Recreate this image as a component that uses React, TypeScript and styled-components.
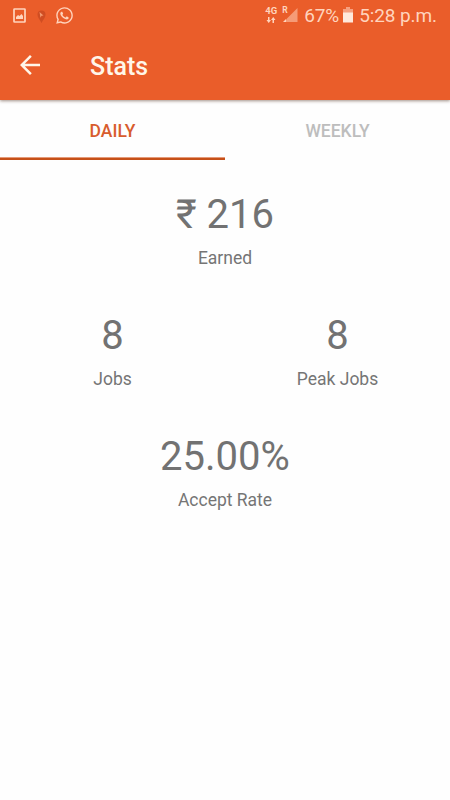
import React from 'react';
import styled, { createGlobalStyle } from 'styled-components';
import { FaWhatsapp } from 'react-icons/fa';
import { MdArrowBack } from 'react-icons/md';

const Global = createGlobalStyle`
  * { box-sizing: border-box; }
  html, body { margin: 0; background: #fefefe; }
  body { font-family: Roboto, "Noto Sans", sans-serif; }
  svg { display: block; flex: none; }
`;
const Screen = styled.div`width: 450px; height: 800px; background: #fefefe; overflow: hidden;`;
const Header = styled.header`height: 100px; background: #ea5d2a; box-shadow: 0 1px 3px rgba(70,35,15,.5);`;
const StatusBar = styled.div`height: 30px; display: flex; align-items: center; padding: 0 13px; color: #ffd4bd;`;
const Notices = styled.div`display: flex; align-items: center; flex: 1;`;
const Pin = styled.svg`margin: 2px 9px 0 11px;`;
const Network = styled.div`
  width: 14px; height: 16px; display: flex; flex-direction: column; align-items: center;
  justify-content: space-between; font-size: 9.5px; line-height: 8px; font-weight: 700; margin-right: 4px;
`;
const Signal = styled.div`
  width: 16px; height: 16px; display: grid; font-size: 8.5px; line-height: 7px; font-weight: 700; margin-right: 6px;
  & > * { grid-area: 1 / 1; }
`;
const StatusText = styled.span`font-size: 19px; line-height: 30px; letter-spacing: -0.1px; padding-top: 2px; white-space: nowrap;`;
const Battery = styled.svg`margin: 0 6px 0 4px;`;
const TitleRow = styled.div`height: 70px; display: flex; align-items: center; padding: 0 0 0 15px; gap: 45px;`;
const Title = styled.h1`margin: 3px 0 0; font-size: 25px; font-weight: 500; line-height: 30px; color: #fff6e9;`;
const Tabs = styled.nav`height: 60px; display: grid; grid-template-columns: 1fr 1fr;`;
const Tab = styled.div<{ $active?: boolean }>`
  display: flex; align-items: center; justify-content: center; padding-top: 4px;
  font-size: 17.5px; font-weight: 500;
  color: ${p => p.$active ? '#d85c2d' : '#bdbdbd'};
  background: ${p => p.$active ? 'linear-gradient(#e59a78, #e59a78) 0 57px / 100% 1px no-repeat' : 'transparent'};
  border-bottom: 2px solid ${p => p.$active ? '#c65019' : 'transparent'};
`;
const Stats = styled.main`display: grid; grid-template-columns: 1fr 1fr; grid-auto-rows: 121px; padding-top: 31px;`;
const Stat = styled.section<{ $wide?: boolean }>`
  grid-column: ${p => p.$wide ? 'span 2' : 'auto'}; text-align: center;
`;
const Value = styled.div`height: 48px; line-height: 48px; font-size: 40px; color: #727272;`;
const Label = styled.div`font-size: 17.5px; line-height: 24px; margin-top: 7px; color: #757575;`;

const data = [
  { value: '₹ 216', label: 'Earned', wide: true },
  { value: '8', label: 'Jobs' },
  { value: '8', label: 'Peak Jobs' },
  { value: '25.00%', label: 'Accept Rate', wide: true },
];

export default function App() {
  return (
    <Screen>
      <Global />
      <Header>
        <StatusBar>
          <Notices>
            <svg width="13" height="15" viewBox="0 0 13 15">
              <rect x="1" y="1" width="11" height="13" rx=".5" fill="none" stroke="currentColor" strokeWidth="1.700" />
              <path d="M3 11V9l2-2 1.500 1L8.500 6 10 8v3z" fill="currentColor" />
            </svg>
            <Pin width="9" height="13" viewBox="0 0 9 13">
              <path d="M4.500 13C3 10 .5 7.500.5 4.500a4 4 0 0 1 8 0C8.500 7.500 6 10 4.500 13z" fill="#d04d22" />
              <path d="M2.500 2l4 3.500-2 .2-1 2z" fill="#f29a70" />
            </Pin>
            <FaWhatsapp size={19} />
          </Notices>
          <Network>
            <span>4G</span>
            <svg width="10" height="6" viewBox="0 0 10 6">
              <path d="M2 0h1.500v3H5L2.750 6 .5 3H2zM6.500 6H8V3h1.500L7.250 0 5 3h1.500z" fill="currentColor" />
            </svg>
          </Network>
          <Signal>
            <svg width="16" height="16" viewBox="0 0 16 16">
              <path d="M15.500 1v14H4V12.500z" fill="#f59b77" />
              <path d="M1 15l3-3v3z" fill="currentColor" />
            </svg>
            <span>R</span>
          </Signal>
          <StatusText>67%</StatusText>
          <Battery width="10" height="16" viewBox="0 0 10 16">
            <path d="M3 0h4v2h3v4H0V2h3z" fill="#f6a080" />
            <path d="M0 5.500h10V15.500H0z" fill="#ffe9dc" />
          </Battery>
          <StatusText>5:28 p.m.</StatusText>
        </StatusBar>
        <TitleRow>
          <MdArrowBack size={30} color="#fff6e9" />
          <Title>Stats</Title>
        </TitleRow>
      </Header>
      <Tabs><Tab $active>DAILY</Tab><Tab>WEEKLY</Tab></Tabs>
      <Stats>{data.map(d => <Stat key={d.label} $wide={d.wide}><Value>{d.value}</Value><Label>{d.label}</Label></Stat>)}</Stats>
    </Screen>
  );
}
